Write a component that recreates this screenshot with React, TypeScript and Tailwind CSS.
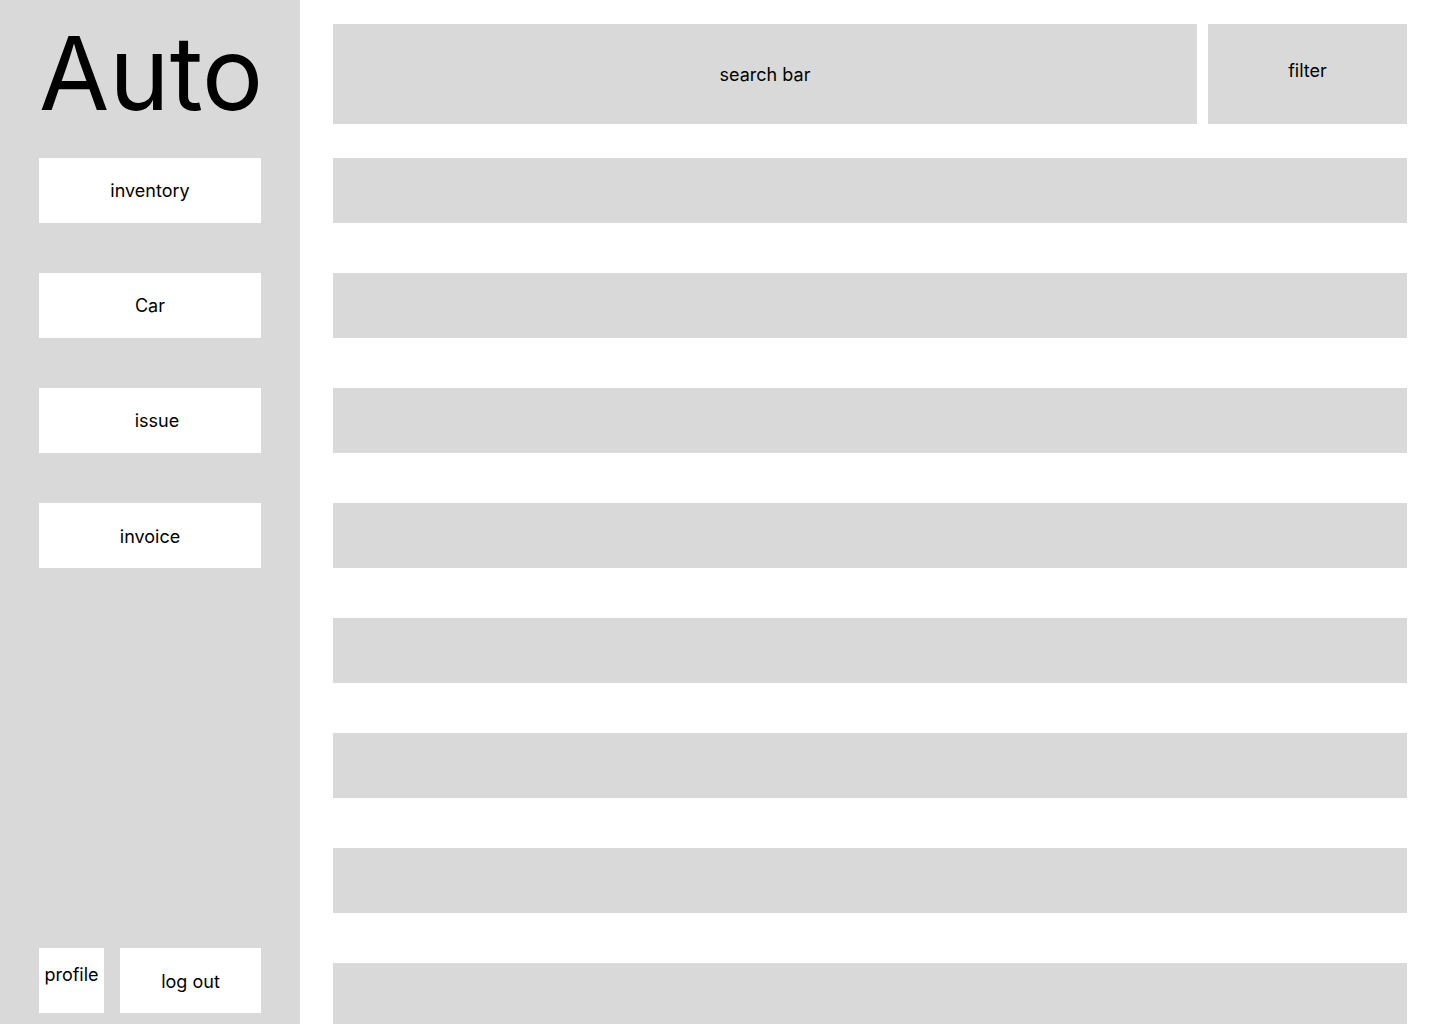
import React from 'react';

const navItems = [
  { label: 'inventory', offset: '' },
  { label: 'Car', offset: '' },
  { label: 'issue', offset: 'pl-[14px]' },
  { label: 'invoice', offset: 'pt-[2px]' },
];

const rows = Array.from({ length: 8 }, (_, i) => i);

export default function App() {
  return (
    <div className="flex h-[1024px] w-[1440px] overflow-hidden bg-white font-['Inter',sans-serif] text-black">
      <aside className="flex w-[300px] shrink-0 flex-col bg-[#d9d9d9] px-[39px] pb-[11px]">
        <h1 className="mt-[11px] h-[124px] pr-[5px] text-center text-[102px] font-normal leading-[124px]">
          Auto
        </h1>
        <nav className="mt-[23px] flex flex-col gap-[50px]">
          {navItems.map((item) => (
            <button
              key={item.label}
              type="button"
              className={`flex h-[65px] w-full items-center justify-center bg-white text-[18px] ${item.offset}`}
            >
              {item.label}
            </button>
          ))}
        </nav>
        <div className="mt-auto flex gap-4">
          <button type="button" className="flex h-[65px] w-[65px] justify-center bg-white pt-[15px] text-[18px] leading-[24px]">
            profile
          </button>
          <button type="button" className="flex h-[65px] flex-1 items-center justify-center bg-white pt-[2px] text-[18px]">
            log out
          </button>
        </div>
      </aside>

      <main className="flex flex-1 flex-col px-[33px] pt-[24px]">
        <div className="flex gap-[11px]">
          <div className="flex h-[100px] flex-1 items-center justify-center bg-[#d9d9d9] text-[18px]">
            search bar
          </div>
          <div className="flex h-[100px] w-[199px] items-center justify-center bg-[#d9d9d9] pb-[8px] text-[18px]">
            filter
          </div>
        </div>
        <div className="mt-[34px] flex flex-col gap-[50px]">
          {rows.map((r) => (
            <div key={r} className="h-[65px] w-full shrink-0 bg-[#d9d9d9]" />
          ))}
        </div>
      </main>
    </div>
  );
}
